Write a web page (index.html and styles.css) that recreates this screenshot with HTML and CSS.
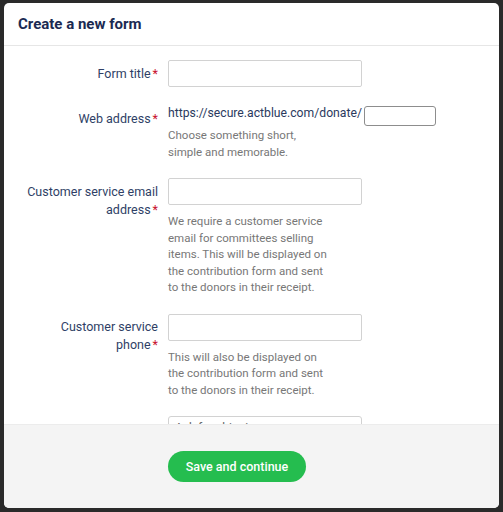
FILE: index.html
```html
<!DOCTYPE html>
<html>

<head>
    <title>Create a new form</title>
    <link rel="stylesheet" href="styles.css">
</head>

<body>
    <div class="modal">
        <div class="modal-header">
            <h1>Create a new form</h1>
        </div>
        <div class="modal-body">
            <div class="form-group">
                <label>Form title<span class="req">*</span></label>
                <div class="field">
                    <input type="text" class="text-input">
                </div>
            </div>
            <div class="form-group">
                <label>Web address<span class="req">*</span></label>
                <div class="field">
                    <div class="url-line">https://secure.actblue.com/donate/<input type="text" class="slug-input"></div>
                    <p class="help help-tight">Choose something short,<br>simple and memorable.</p>
                </div>
            </div>
            <div class="form-group">
                <label>Customer service email address<span class="req">*</span></label>
                <div class="field">
                    <input type="text" class="text-input">
                    <p class="help">We require a customer service email for committees selling items. This will be displayed on the contribution form and sent to the donors in their receipt.</p>
                </div>
            </div>
            <div class="form-group">
                <label>Customer service phone<span class="req">*</span></label>
                <div class="field">
                    <input type="text" class="text-input">
                    <p class="help">This will also be displayed on the contribution form and sent to the donors in their receipt.</p>
                </div>
            </div>
            <div class="form-group">
                <label>Shipping to form<span class="req">*</span></label>
                <div class="field">
                    <div class="select-box">Ask for shipping <span class="arrow">&#8964;</span></div>
                </div>
            </div>
        </div>
        <div class="modal-footer">
            <button class="save-button">Save and continue</button>
        </div>
    </div>
</body>

</html>
```

FILE: styles.css
```css
body {
    margin: 0;
    padding: 3px 4px 4px 4px;
    background-color: #2a2a2a;
    font-family: Roboto, "Liberation Sans", sans-serif;
}

.modal {
    height: 505px;
    background-color: #fff;
    border-radius: 5px;
    display: flex;
    flex-direction: column;
    overflow: hidden;
}

.modal-header {
    height: 42px;
    border-bottom: 1px solid #e6e6e6;
    display: flex;
    align-items: center;
    padding: 0 14px;
}

h1 {
    margin: 0;
    font-size: 15px;
    font-weight: 700;
    color: #1b2a52;
}

.modal-body {
    flex: 1;
    overflow: hidden;
    padding: 14px 18px 0 18px;
}

.form-group {
    display: grid;
    grid-template-columns: 136px 194px;
    column-gap: 10px;
    margin-bottom: 18px;
}

label {
    text-align: right;
    font-size: 12.5px;
    line-height: 18px;
    padding-top: 4.5px;
    color: #2f3f66;
}

.req {
    color: #c8102e;
    margin-left: 2px;
}

.text-input {
    display: block;
    box-sizing: border-box;
    width: 194px;
    height: 27px;
    border: 1px solid #d2d2d2;
    border-radius: 2px;
    margin: 0;
}

.url-line {
    display: flex;
    align-items: flex-start;
    white-space: nowrap;
    font-size: 12.2px;
    line-height: 16px;
    color: #2b3a5e;
}

.slug-input {
    box-sizing: border-box;
    width: 72px;
    height: 20px;
    margin: 1px 0 0 2px;
    border: 1px solid #8d8d8d;
    border-radius: 3px;
    flex-shrink: 0;
}

.help {
    width: 160px;
    margin: 8px 0 0 0;
    font-size: 11.5px;
    line-height: 16.5px;
    color: #777;
}

.help-tight {
    margin-top: 1px;
}

.select-box {
    box-sizing: border-box;
    height: 27px;
    border: 1px solid #d2d2d2;
    border-radius: 3px;
    font-size: 12px;
    color: #666;
    padding: 4px 6px;
    display: flex;
    justify-content: space-between;
}

.modal-footer {
    height: 83px;
    flex-shrink: 0;
    background-color: #f4f4f4;
    border-top: 1px solid #ececec;
    display: flex;
    align-items: center;
    padding-left: 164px;
}

.save-button {
    background-color: #25bd4f;
    color: white;
    border: none;
    width: 138px;
    height: 31px;
    border-radius: 16px;
    font-family: Roboto, "Liberation Sans", sans-serif;
    font-size: 12.5px;
    font-weight: 500;
    cursor: pointer;
}
```
